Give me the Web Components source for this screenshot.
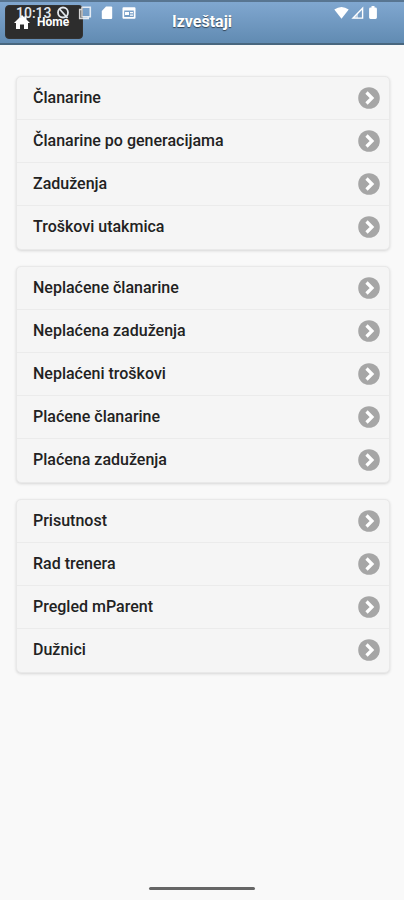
<!DOCTYPE html>
<html lang="sr-Latn">
<head>
<meta charset="utf-8">
<meta name="viewport" content="width=device-width, initial-scale=1">
<title>Izveštaji</title>
<style>
html { height: 100%; }
body { margin: 0; min-height: 100%; display: grid; background: #f9f9f9; color: #222; font: 500 16px/20px Roboto, "Noto Sans", sans-serif; }
</style>
</head>
<body>
<report-page></report-page>
<script>
const define = (name, html) => {
  const template = document.createElement('template');
  template.innerHTML = html;
  customElements.define(name, class extends HTMLElement {
    constructor() {
      super();
      this.attachShadow({ mode: 'open' }).append(template.content.cloneNode(true));
    }
  });
};

define('status-bar', `
<style>
:host { display: flex; align-items: center; justify-content: space-between; box-sizing: border-box; height: 26px; padding: 0 24px 0 16px; color: #fff; font: 500 14px/24px Roboto, sans-serif; pointer-events: none; }
div { display: flex; align-items: center; }
.left { gap: 8px; }
.right { gap: 2px; }
time { color: #e4e9ee; margin-right: -4px; }
svg { display: block; fill: currentColor; }
.faint { opacity: .8; }
</style>
<div class="left">
  <time>10:13</time>
  <svg width="14" height="14" viewBox="0 0 14 14"><circle cx="7" cy="6.500" r="5" fill="none" stroke="#e4e9ee" stroke-width="1.800"/><path d="M3.500 3l8 9" stroke="#e4e9ee" stroke-width="1.800"/></svg>
  <svg class="faint" width="14" height="14" viewBox="0 0 14 14" stroke="#fff" stroke-width="1.600"><path fill="none" d="M4 1.200h8.300v9.500H4zM4 3.500H1.700v9h8.500v-2"/></svg>
  <svg width="14" height="14" viewBox="0 0 14 14"><path d="M6 .5h5.200q1 0 1 1V12q0 1-1 1H2.800q-1 0-1-1V5z"/></svg>
  <svg width="14" height="14" viewBox="0 0 14 14"><path fill-rule="evenodd" d="M1.500 1.200h11q1 0 1 1v9.600q0 1-1 1h-11q-1 0-1-1V2.200q0-1 1-1zM2.200 4.500v6.600h9.600V4.500zM3 6h4v3H3zM8 6h3v1.200H8zM8 8.500h3v1.200H8z"/></svg>
</div>
<div class="right">
  <svg width="15" height="14" viewBox="0 0 15 14"><path d="M.3 3.600Q7.500-1.500 14.700 3.600L7.500 12.800z"/></svg>
  <svg width="13" height="14" viewBox="0 0 13 14"><path fill="none" stroke="#fff" stroke-width="1.400" d="M11.600 2.200v9.900H2z"/><path d="M7 7.500v4.800H2z" opacity=".5"/></svg>
  <svg width="14" height="14" viewBox="0 0 14 14"><path d="M5.500 0h3v1.500h1q1.400 0 1.400 1.400v8.700q0 1.400-1.400 1.400h-5q-1.400 0-1.400-1.400V2.900q0-1.400 1.400-1.400h1z"/></svg>
</div>`);

define('home-button', `
<style>
:host { display: block; }
button { display: flex; align-items: center; gap: 7px; box-sizing: border-box; height: 34px; width: 78px; padding: 0 0 0 8px; border: 1px solid #333; border-radius: 4px; background: #2d2d2d; color: #fff; font: 700 12px/16px Roboto, sans-serif; cursor: pointer; }
svg { display: block; flex: none; }
</style>
<button type="button">
  <svg width="16" height="16" viewBox="0 0 16 16" fill="#fff"><path d="M8 1l2.500 2.500V2h2v3.500L16 9h-2v6h-4v-4.500H6V15H2V9H0z"/></svg>
  <slot></slot>
</button>`);

define('app-header', `
<style>
:host { position: relative; display: grid; grid-template-columns: 1fr auto 1fr; align-items: center; box-sizing: border-box; height: 45px; padding: 0 5px 2px; border-top: 2px solid #587591; border-bottom: 2px solid #49677f; background: linear-gradient(#80a7d0, #618bb2); color: #fff; }
h1 { margin: 0; font: 700 16px/20px Roboto, sans-serif; text-shadow: 0 1px 1px #345; }
status-bar { position: absolute; inset: -2px 0 auto; }
</style>
<home-button>Home</home-button>
<h1><slot></slot></h1>
<status-bar></status-bar>`);

define('report-group', `
<style>
:host { display: block; box-sizing: border-box; border: 1px solid #e9e9e9; border-radius: 5px; background: #f5f5f5; box-shadow: 0 1px 3px rgba(0,0,0,.14); overflow: hidden; }
</style>
<slot></slot>`);

define('report-link', `
<style>
:host { display: block; border-bottom: 1px solid #ebebeb; }
:host(:last-child) { border-bottom-color: transparent; }
a { display: flex; align-items: center; justify-content: space-between; height: 42px; padding: 0 9px 0 16px; color: inherit; text-decoration: none; }
svg { display: block; flex: none; }
</style>
<a href="#"><slot></slot>
  <svg width="22" height="22" viewBox="0 0 22 22" aria-hidden="true"><circle cx="11" cy="11" r="10.800" fill="#a6a6a6"/><path d="M8.500 5.500l5.500 5.500-5.500 5.500" fill="none" stroke="#fff" stroke-width="3.200"/></svg>
</a>`);

define('report-page', `
<style>
:host { display: flex; flex-direction: column; }
main { flex: 1; display: flex; flex-direction: column; gap: 16px; padding: 31px 14px 16px 16px; }
footer { display: flex; justify-content: center; padding-bottom: 10px; }
footer span { width: 106px; height: 3px; border-radius: 2px; background: #666; }
</style>
<app-header>Izveštaji</app-header>
<main>
  <report-group>
    <report-link>Članarine</report-link>
    <report-link>Članarine po generacijama</report-link>
    <report-link>Zaduženja</report-link>
    <report-link>Troškovi utakmica</report-link>
  </report-group>
  <report-group>
    <report-link>Neplaćene članarine</report-link>
    <report-link>Neplaćena zaduženja</report-link>
    <report-link>Neplaćeni troškovi</report-link>
    <report-link>Plaćene članarine</report-link>
    <report-link>Plaćena zaduženja</report-link>
  </report-group>
  <report-group>
    <report-link>Prisutnost</report-link>
    <report-link>Rad trenera</report-link>
    <report-link>Pregled mParent</report-link>
    <report-link>Dužnici</report-link>
  </report-group>
</main>
<footer><span></span></footer>`);
</script>
</body>
</html>
